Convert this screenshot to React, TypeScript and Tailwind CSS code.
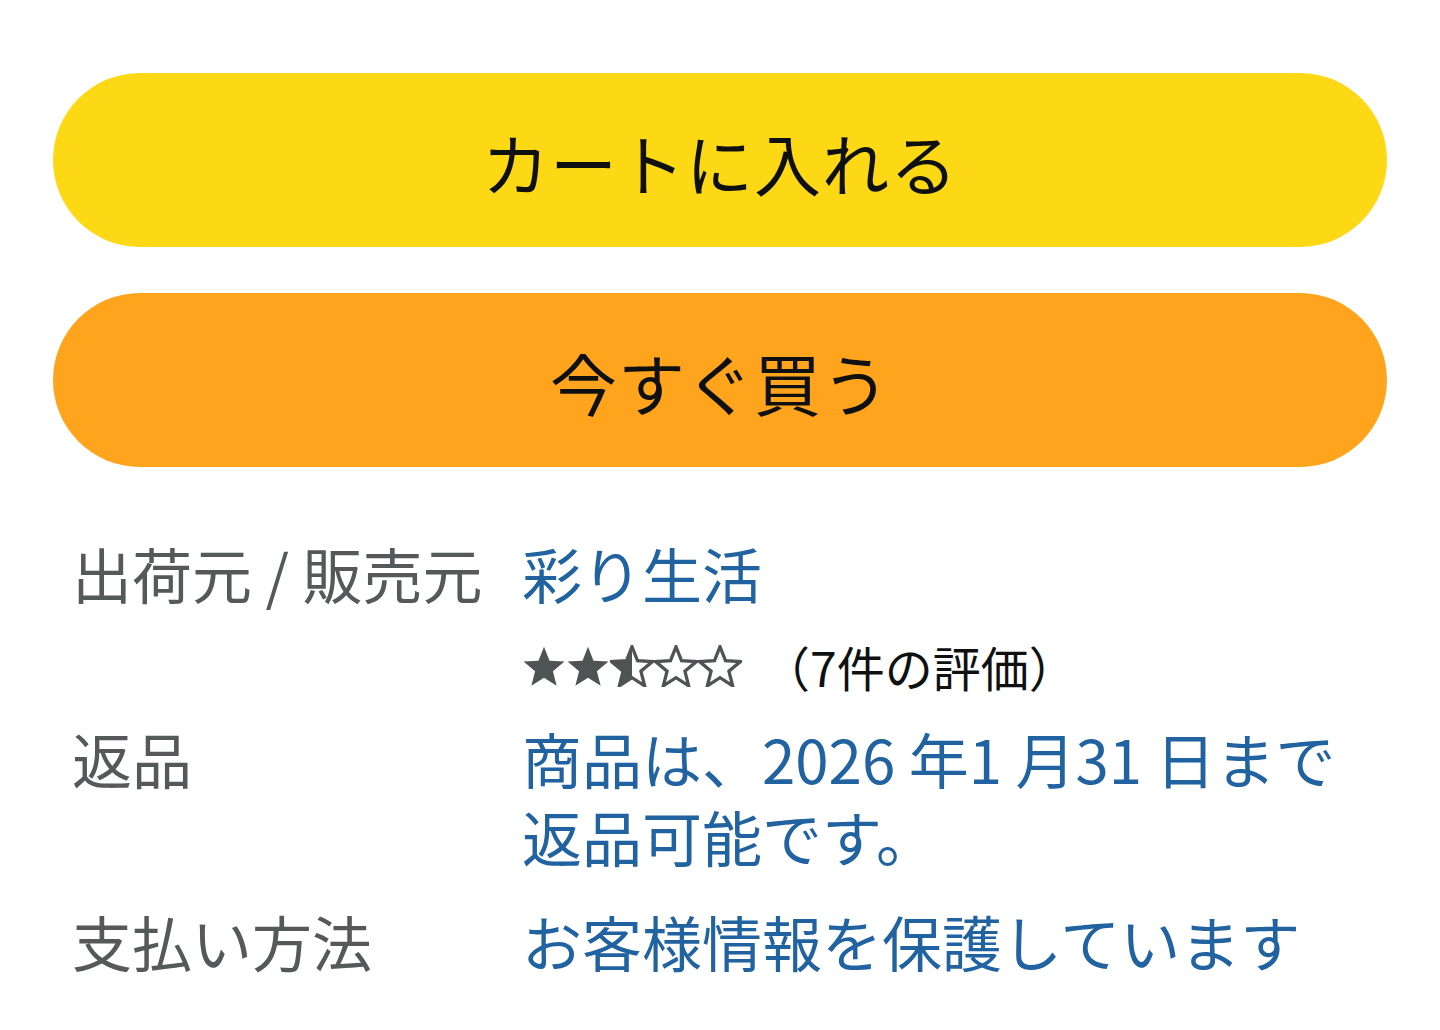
import React from "react";

const font = { fontFamily: '"Noto Sans CJK JP", "Noto Sans", sans-serif' };

function Star({ fill }: { fill: "full" | "half" | "empty" }) {
  const d =
    "M20 1.5 L25 14.2 L38.6 15 L28.1 23.7 L31.5 37 L20 29.6 L8.5 37 L11.9 23.7 L1.4 15 L15 14.2 Z";
  return (
    <svg width="44" height="42" viewBox="0 0 40 38" className="shrink-0">
      <defs>
        <clipPath id="half">
          <rect x="0" y="0" width="20" height="40" />
        </clipPath>
      </defs>
      {fill === "full" && <path d={d} fill="#4f5353" />}
      {fill === "half" && (
        <>
          <path d={d} fill="#4f5353" clipPath="url(#half)" />
          <path d={d} fill="none" stroke="#4f5353" strokeWidth="3" />
        </>
      )}
      {fill === "empty" && <path d={d} fill="none" stroke="#4f5353" strokeWidth="3" />}
    </svg>
  );
}

function Row({ label, children, className = "" }: { label?: string; children: React.ReactNode; className?: string }) {
  return (
    <div className={`flex ${className}`}>
      <div className="w-[469px] shrink-0 pl-[19px] text-[#565959]">{label}</div>
      <div className="flex-1">{children}</div>
    </div>
  );
}

export default function App() {
  return (
    <div className="min-h-[1030px] w-[1440px] bg-white px-[53px] pt-[73px]" style={font}>
      <div className="flex flex-col gap-[46px]">
        <button className="flex h-[174px] w-full items-center justify-center rounded-full bg-[#fdd814] pt-[5px] text-[67px] tracking-[1px] text-[#0f1111]">
          カートに入れる
        </button>
        <button className="flex h-[174px] w-full items-center justify-center rounded-full bg-[#ffa41c] pt-[5px] text-[67px] tracking-[1px] text-[#0f1111]">
          今すぐ買う
        </button>
      </div>

      <div className="mt-[67px] text-[60px] leading-[78px]">
        <Row label="出荷元 / 販売元">
          <span className="text-[#2162a1]">彩り生活</span>
        </Row>
        <Row className="mt-[26px]">
          <div className="flex h-[56px] items-center">
            <div className="flex items-center">
              <Star fill="full" />
              <Star fill="full" />
              <Star fill="half" />
              <Star fill="empty" />
              <Star fill="empty" />
            </div>
            <span className="ml-[20px] text-[48px] leading-[56px] text-[#0f1111]">（7件の評価）</span>
          </div>
        </Row>
        <Row label="返品" className="mt-[25px]">
          <div className="pr-[40px] text-[#2162a1]">商品は、2026 年1 月31 日まで返品可能です。</div>
        </Row>
        <Row label="支払い方法" className="mt-[27px]">
          <span className="text-[#2162a1]">お客様情報を保護しています</span>
        </Row>
      </div>
    </div>
  );
}
